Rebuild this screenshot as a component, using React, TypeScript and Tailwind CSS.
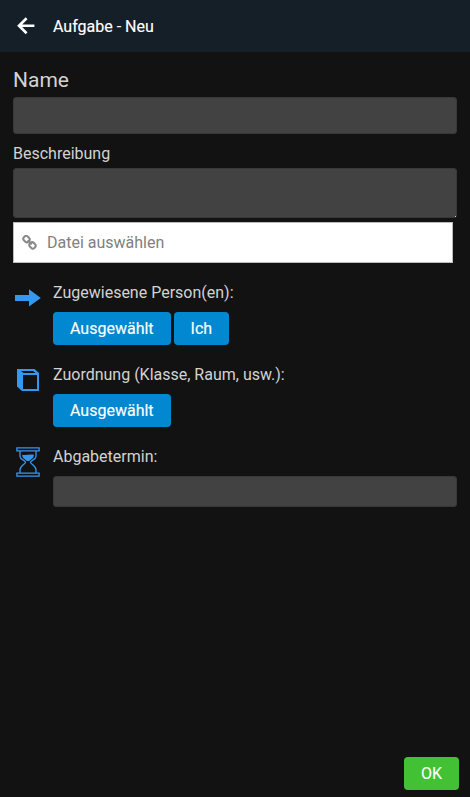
import type { ReactNode } from 'react'

function BackIcon() {
  return (
    <svg width="18" height="18" viewBox="0 0 18 18" fill="none" stroke="#fff" strokeWidth="2.6">
      <path d="M9.600 1.200L2 8.700l7.600 7.500M2.200 8.700h15.200" />
    </svg>
  )
}

function LinkIcon() {
  return (
    <svg width="16" height="16" viewBox="0 0 16 16" fill="none" stroke="#888" strokeWidth="2">
      <rect x="1.300" y="1.400" width="6.400" height="5.400" rx="2.500" transform="rotate(45 4.500 4.100)" />
      <rect x="7.300" y="7.700" width="6.400" height="5.400" rx="2.500" transform="rotate(45 10.500 10.400)" />
      <path d="M5.600 5.400l4.200 4" />
    </svg>
  )
}

function ArrowIcon() {
  return (
    <svg width="26" height="18" viewBox="0 0 26 18" fill="#3498f0">
      <path d="M0 6h14V.3L25.800 9 14 17.500V12H0z" />
    </svg>
  )
}

function CubeIcon() {
  return (
    <svg width="22" height="22" viewBox="0 0 22 22" fill="#3498f0">
      <path
        fillRule="evenodd"
        d="M0 0h17.500L22 4v18H5L0 17.500zM6 6v14h14V6zM4 2l2.500 2h12L16 2z"
      />
    </svg>
  )
}

function HourglassIcon() {
  return (
    <svg width="24" height="30" viewBox="0 0 24 30" fill="none" stroke="#3498f0" strokeWidth="1.3">
      <path d="M.9.8h22.200v3H.9zM.9 26.200h22.200v3H.9z" />
      <path d="M4 4v5.500c0 3 5.500 4 5.500 5.700S4 18.800 4 22.500V26M20 4v5.500c0 3-5.500 4-5.500 5.700s5.500 3.600 5.500 7.300V26" />
      <path d="M6.200 7.800c3.200.8 8.400-.8 11.600 0 .4 3.200-3 4.400-4.600 6.200h-2.400c-1.600-1.800-5-3-4.600-6.200z" fill="#3498f0" stroke="none" />
    </svg>
  )
}

function BlueButton({ children }: { children: ReactNode }) {
  return (
    <button className="h-[33px] rounded bg-[#0288d1] px-[17px] text-base leading-[33px] text-white cursor-pointer [-webkit-text-stroke:0.15px_white]">
      {children}
    </button>
  )
}

interface FieldRowProps {
  icon: ReactNode
  iconClass: string
  label: string
  children: ReactNode
}

function FieldRow({ icon, iconClass, label, children }: FieldRowProps) {
  return (
    <div className="mt-[18px] flex">
      <div className={`w-10 shrink-0 ${iconClass}`}>{icon}</div>
      <div className="min-w-0 flex-1">
        <div className="h-6 text-base leading-6">{label}</div>
        <div className="mt-[7px] flex gap-[3px]">{children}</div>
      </div>
    </div>
  )
}

export default function App() {
  return (
    <div className="flex h-screen flex-col bg-[#121212] font-['Roboto',sans-serif] text-[#d3d3d3]">
      <header className="flex h-[52px] shrink-0 items-center bg-[#151f28] pl-[17px] text-white">
        <button className="w-9 cursor-pointer" aria-label="Zurück">
          <BackIcon />
        </button>
        <h1 className="pt-0.5 text-base [-webkit-text-stroke:0.15px_white]">Aufgabe - Neu</h1>
      </header>

      <main className="flex flex-1 flex-col px-[13px] pt-[14px]">
        <label htmlFor="name" className="h-[31px] text-[21px] leading-7">Name</label>
        <input id="name" className="h-[37px] rounded-[3px] border border-[#383838] bg-[#424242] px-2 outline-none" />

        <label htmlFor="description" className="mt-2 h-[26px] text-base leading-6">Beschreibung</label>
        <div className="relative h-[50px]">
          <textarea
            id="description"
            className="block h-full w-full resize-none rounded-[3px] border border-[#383838] bg-[#424242] px-2 outline-none"
          />
          <span className="absolute bottom-px right-px size-px bg-[#d0d0d0]" />
        </div>

        <div className="mr-1 mt-1 flex h-[41px] items-center border border-[#b9bdbd] bg-white pl-2 text-[#808080]">
          <LinkIcon />
          <span className="ml-[9px] text-base">Datei auswählen</span>
        </div>

        <FieldRow icon={<ArrowIcon />} iconClass="pl-[2px] pt-2" label="Zugewiesene Person(en):">
          <BlueButton>Ausgewählt</BlueButton>
          <BlueButton>Ich</BlueButton>
        </FieldRow>

        <FieldRow icon={<CubeIcon />} iconClass="pl-1 pt-[6px]" label="Zuordnung (Klasse, Raum, usw.):">
          <BlueButton>Ausgewählt</BlueButton>
        </FieldRow>

        <FieldRow icon={<HourglassIcon />} iconClass="pl-[3px] pt-[2px]" label="Abgabetermin:">
          <input className="h-[31px] w-full rounded-[3px] border border-[#383838] bg-[#424242] px-2 outline-none" />
        </FieldRow>
      </main>

      <footer className="flex justify-end pb-[7px] pr-[11px]">
        <button className="h-[33px] w-[55px] rounded bg-[#43c135] text-base leading-[33px] text-white cursor-pointer [-webkit-text-stroke:0.1px_white]">
          OK
        </button>
      </footer>
    </div>
  )
}
